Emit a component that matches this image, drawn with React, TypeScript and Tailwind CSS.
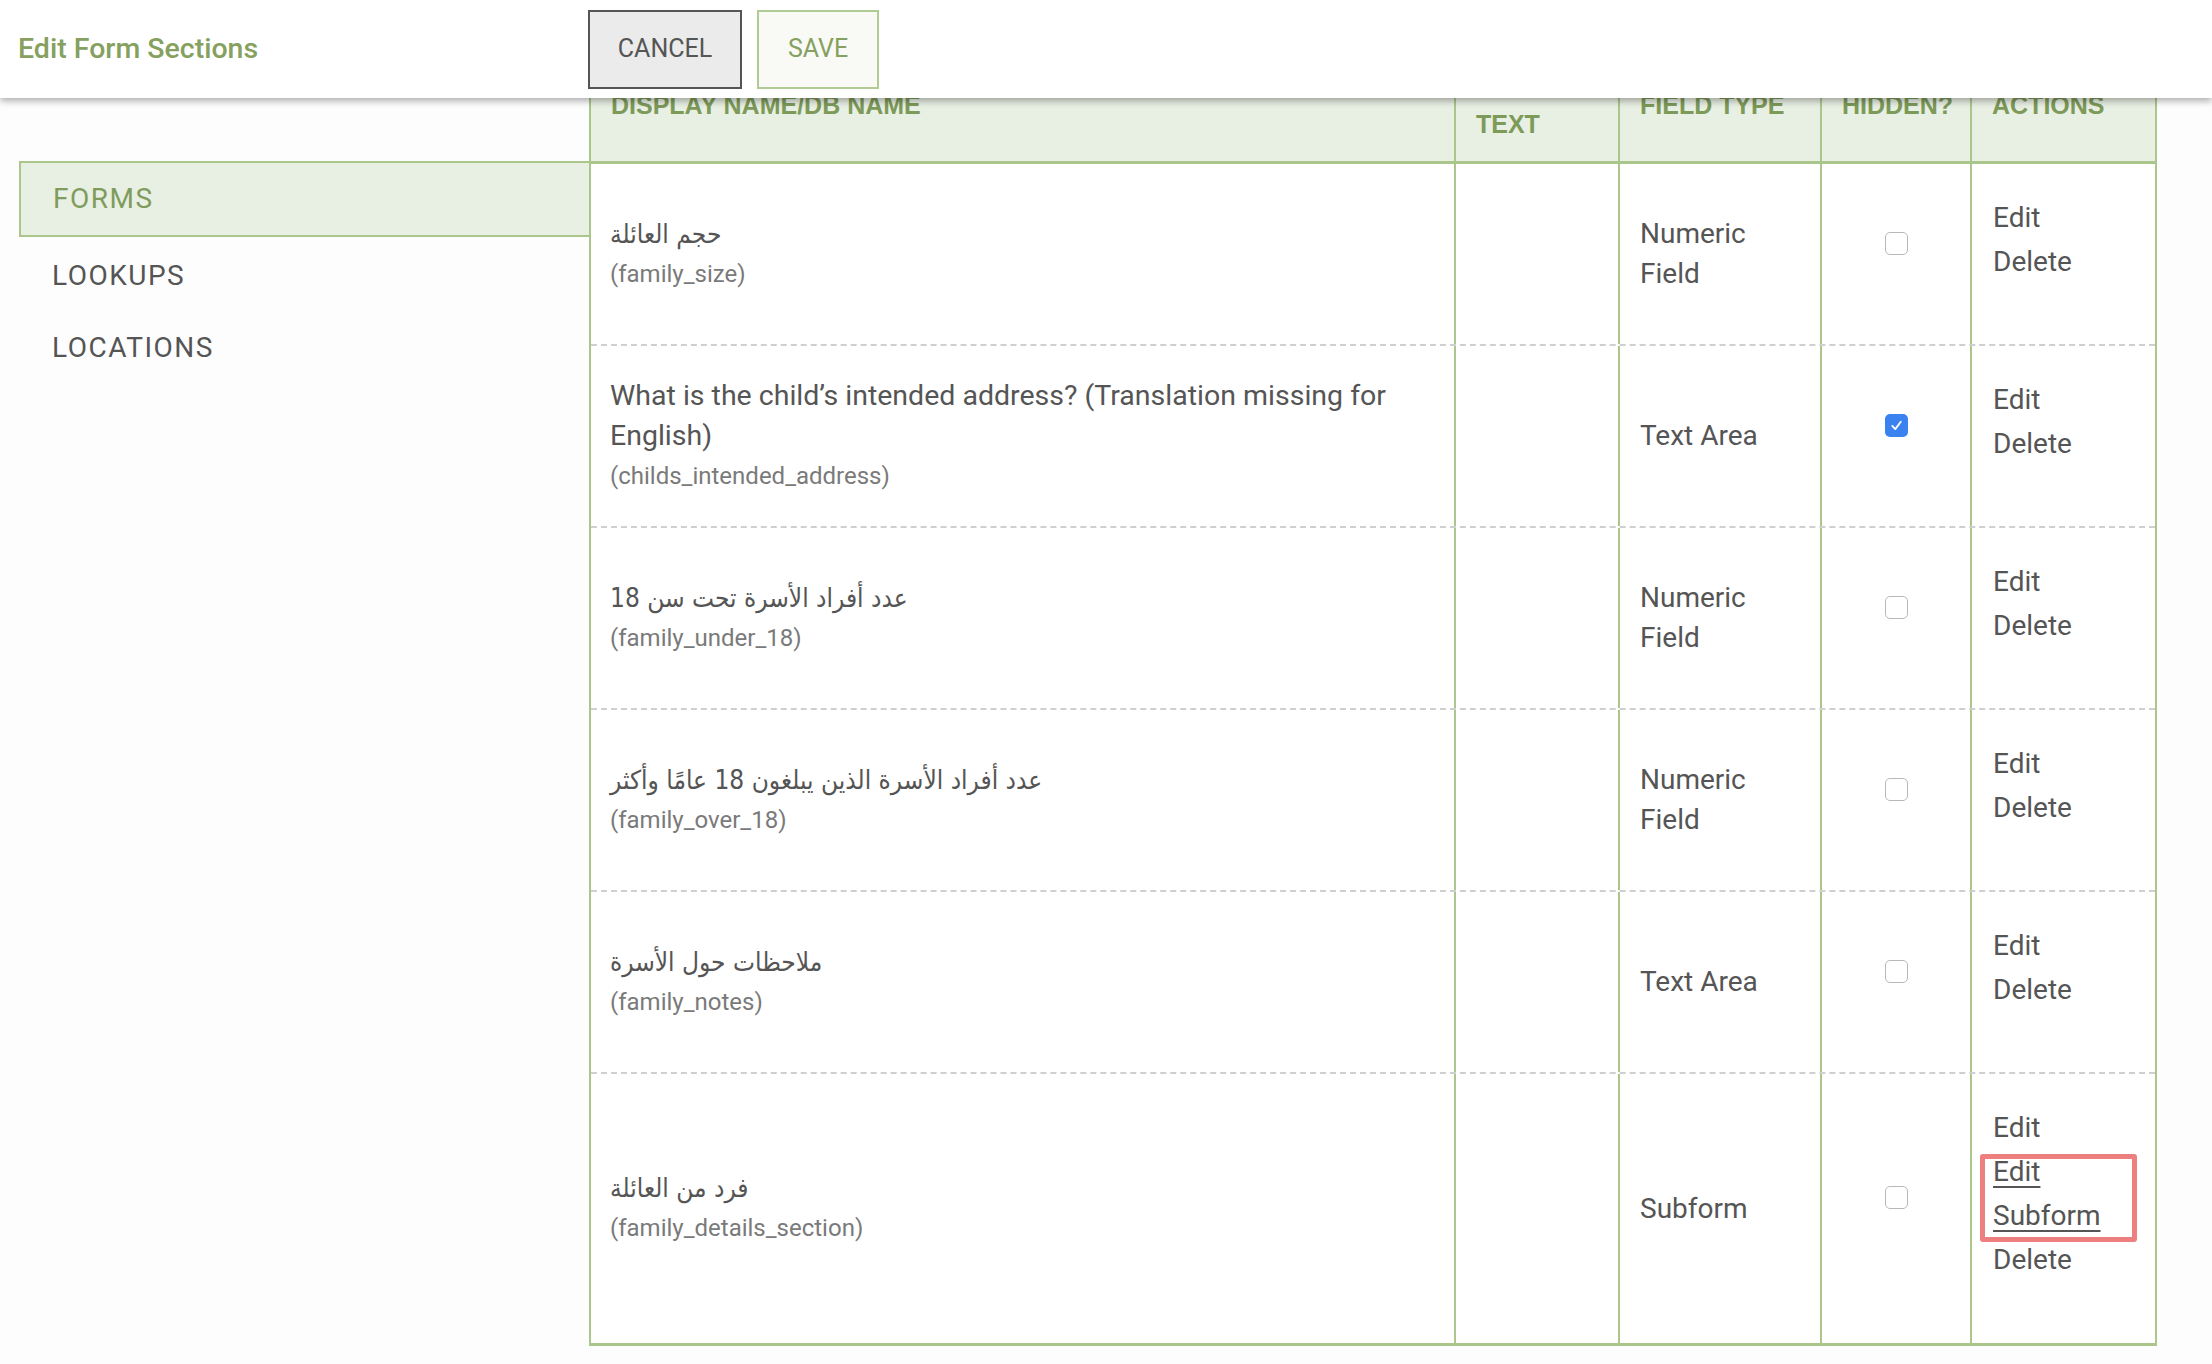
import React from "react";

type Row = {
  label: string;
  db: string;
  type: string;
  hidden: boolean;
  subform?: boolean;
};

const rows: Row[] = [
  { label: "حجم العائلة", db: "family_size", type: "Numeric Field", hidden: false },
  {
    label: "What is the child’s intended address? (Translation missing for English)",
    db: "childs_intended_address",
    type: "Text Area",
    hidden: true,
  },
  { label: "عدد أفراد الأسرة تحت سن 18", db: "family_under_18", type: "Numeric Field", hidden: false },
  {
    label: "عدد أفراد الأسرة الذين يبلغون 18 عامًا وأكثر",
    db: "family_over_18",
    type: "Numeric Field",
    hidden: false,
  },
  { label: "ملاحظات حول الأسرة", db: "family_notes", type: "Text Area", hidden: false },
  { label: "فرد من العائلة", db: "family_details_section", type: "Subform", hidden: false, subform: true },
];

const isArabic = (s: string) => /[\u0600-\u06FF]/.test(s);

function Checkbox({ checked }: { checked: boolean }) {
  if (checked) {
    return (
      <div className="mb-[22px] flex h-[23px] w-[23px] items-center justify-center rounded-[5px] bg-[#3a82f0]">
        <svg width="15" height="15" viewBox="0 0 16 16" fill="none">
          <path d="M3.5 8.5 L6.7 11.8 L12.6 4" stroke="white" strokeWidth="2" strokeLinecap="round" strokeLinejoin="round" />
        </svg>
      </div>
    );
  }
  return <div className="mb-[22px] h-[23px] w-[23px] rounded-[5px] border-[1.5px] border-[#b8b8b8] bg-white" />;
}

export default function App() {
  return (
    <div
      className="relative h-[1364px] w-[2212px] overflow-hidden bg-[#fdfdfd] text-[#555555]"
      style={{ fontFamily: "Roboto, 'DejaVu Sans', sans-serif" }}
    >
      {/* Top bar */}
      <header className="absolute inset-x-0 top-0 z-10 flex h-[98px] items-center bg-white shadow-[0_3px_7px_rgba(0,0,0,0.32)]">
        <div className="w-[588px] pl-[18px] text-[28.5px] font-medium text-[#85a05f]">Edit Form Sections</div>
        <div className="flex gap-[15px]">
          <button className="h-[79px] w-[154px] border-2 border-[#555555] bg-[#ebebeb] text-[25px] text-[#555555]">
            CANCEL
          </button>
          <button className="h-[79px] w-[122px] border-2 border-[#b1cb94] bg-[#f9faf6] text-[25px] text-[#85a05f]">
            SAVE
          </button>
        </div>
      </header>

      {/* Content */}
      <div className="flex pt-[32px]">
        <aside className="ml-[19px] w-[570px] shrink-0 pt-[129px] text-[28px] tracking-[1.5px]">
          <div className="flex h-[76px] items-center border-y-2 border-l-2 border-[#abc68b] bg-[#e8efe3] pl-[32px] text-[#7f9c5c]">
            FORMS
          </div>
          <div className="flex h-[78px] items-center pl-[33px]">LOOKUPS</div>
          <div className="flex h-[66px] items-center pl-[33px]">LOCATIONS</div>
        </aside>

        <div className="w-[1568px] shrink-0 border-x-2 border-b-[3px] border-[#abc68b]">
          {/* Header row */}
          <div
            className="grid h-[132px] grid-cols-[865px_164px_202px_150px_183px] border-b-[3px] border-[#abc68b] bg-[#e8efe3] text-[25px] font-bold text-[#7d9a59]"
            style={{ fontFamily: "'Liberation Sans', Arial, sans-serif" }}
          >
            <div className="border-r-2 border-[#abc68b] pl-[20px] pt-[61px] leading-[24px]">DISPLAY NAME/DB NAME</div>
            <div className="border-r-2 border-[#abc68b] pl-[20px] pt-[38px] leading-[36px]">
              HELP
              <br />
              TEXT
            </div>
            <div className="border-r-2 border-[#abc68b] pl-[20px] pt-[61px] leading-[24px]">FIELD TYPE</div>
            <div className="border-r-2 border-[#abc68b] pl-[20px] pt-[61px] leading-[24px]">HIDDEN?</div>
            <div className="pl-[20px] pt-[61px] leading-[24px]">ACTIONS</div>
          </div>

          {/* Body rows */}
          {rows.map((r, i) => {
            const last = i === rows.length - 1;
            const ar = isArabic(r.label);
            return (
              <div
                key={r.db}
                className={
                  last
                    ? "grid h-[269px] grid-cols-[865px_164px_202px_150px_183px] bg-white"
                    : "grid h-[182px] grid-cols-[865px_164px_202px_150px_183px] border-b-2 border-dashed border-[#cfcfcf] bg-white"
                }
              >
                <div className="flex flex-col justify-center border-r-2 border-[#abc68b] pl-[19px] pr-[20px]">
                  {ar ? (
                    <div
                      className="text-[26px] leading-[40px] text-[#555555]"
                      style={{ fontFamily: "'DejaVu Sans Condensed', 'DejaVu Sans', sans-serif" }}
                    >
                      {r.label}
                    </div>
                  ) : (
                    <div className="text-[28.5px] leading-[40px] text-[#555555]">{r.label}</div>
                  )}
                  <div className="text-[24px] leading-[41px] text-[#7a7a7a]">({r.db})</div>
                </div>
                <div className="border-r-2 border-[#abc68b]" />
                <div className="flex items-center border-r-2 border-[#abc68b] pl-[20px] pr-[20px] text-[28px] leading-[40px]">
                  {r.type}
                </div>
                <div className="flex items-center justify-center border-r-2 border-[#abc68b]">
                  <Checkbox checked={r.hidden} />
                </div>
                <div className="pl-[21px] pr-[16px] pt-[32px] text-[28px] leading-[44px]">
                  <div>Edit</div>
                  {r.subform && <div className="underline decoration-2 underline-offset-[5px]">Edit Subform</div>}
                  <div>Delete</div>
                </div>
              </div>
            );
          })}
        </div>
      </div>

      {/* Annotation highlight */}
      <div className="absolute left-[1980px] top-[1154px] h-[88px] w-[157px] rounded-[3px] border-[5px] border-[#ee7f7f]" />
    </div>
  );
}
